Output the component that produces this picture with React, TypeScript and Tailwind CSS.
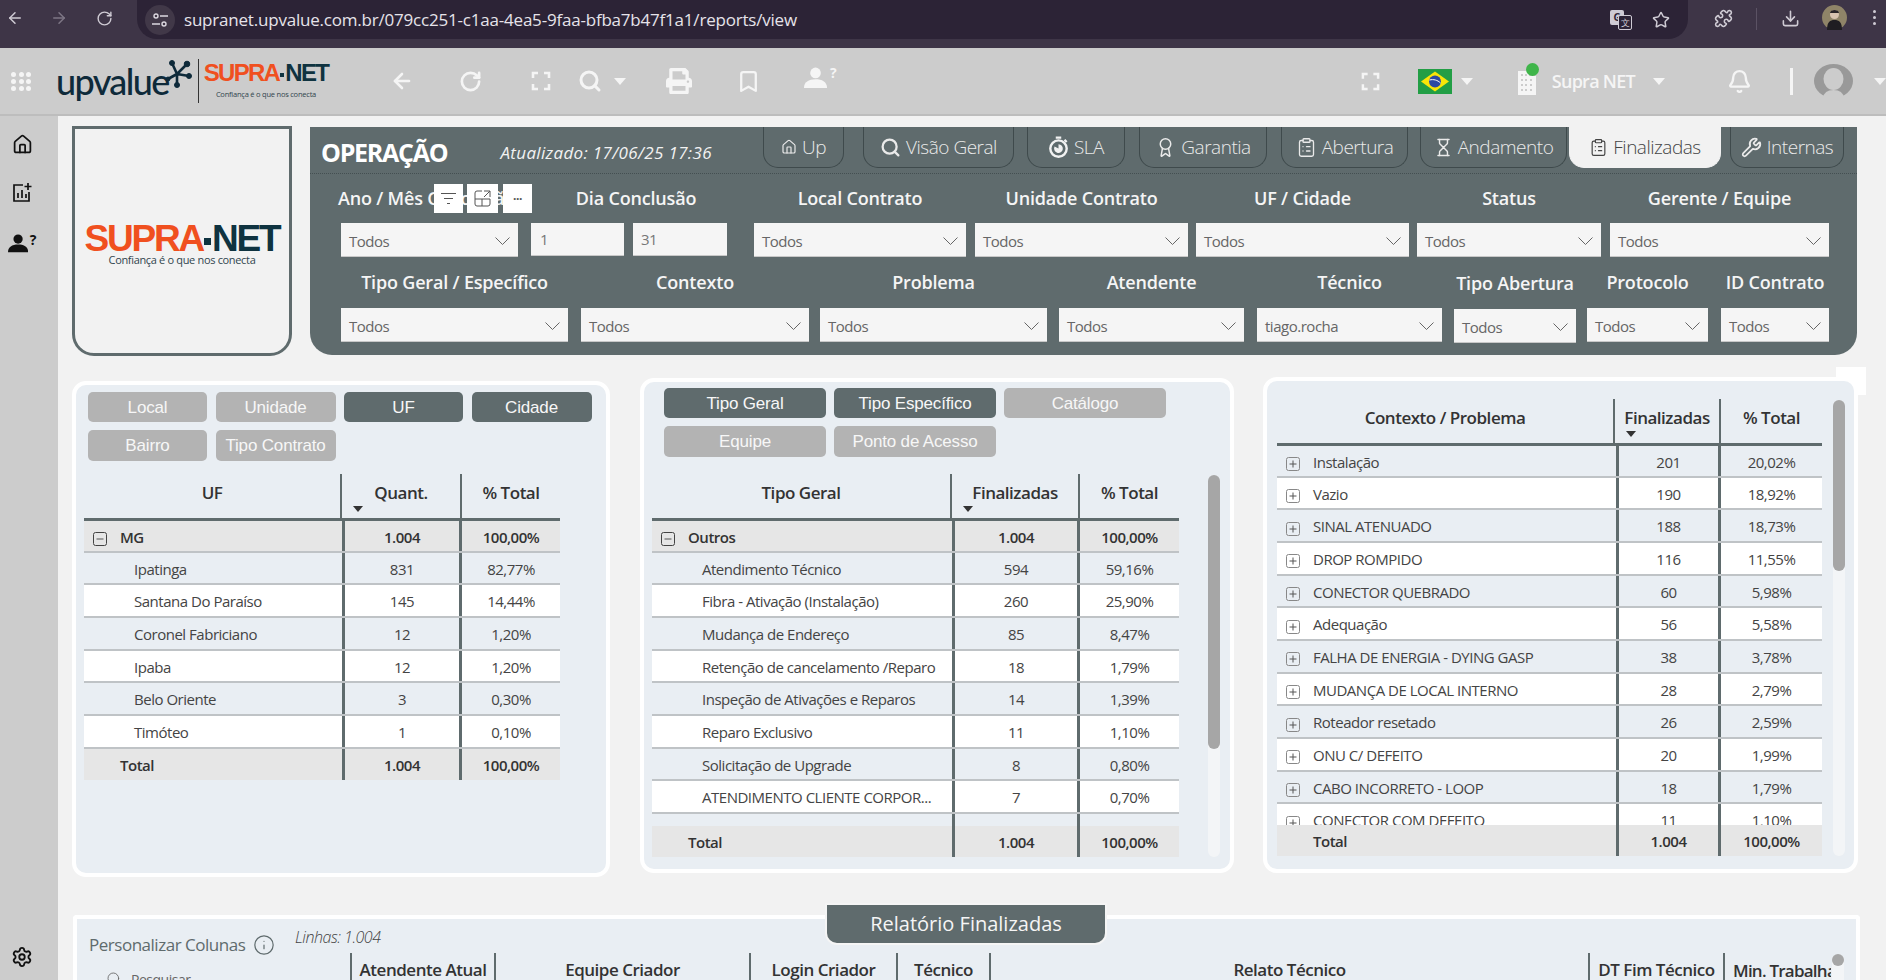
import { ReactNode } from "react";
import { ArrowLeft, ArrowRight, Award, Bell, Bookmark, ClipboardList, Download, Hourglass, House, Info, Puzzle, RotateCw, Search, Settings, Star, Wrench } from "lucide-react";
import { FaPrint } from "react-icons/fa";

type Row = { name: string; a: string; b: string; kind?: "group" | "child" | "plus" };

const ufRows: Row[] = [
  { name: "MG", a: "1.004", b: "100,00%", kind: "group" },
  { name: "Ipatinga", a: "831", b: "82,77%" },
  { name: "Santana Do Paraíso", a: "145", b: "14,44%" },
  { name: "Coronel Fabriciano", a: "12", b: "1,20%" },
  { name: "Ipaba", a: "12", b: "1,20%" },
  { name: "Belo Oriente", a: "3", b: "0,30%" },
  { name: "Timóteo", a: "1", b: "0,10%" },
];

const tipoRows: Row[] = [
  { name: "Outros", a: "1.004", b: "100,00%", kind: "group" },
  { name: "Atendimento Técnico", a: "594", b: "59,16%" },
  { name: "Fibra - Ativação (Instalação)", a: "260", b: "25,90%" },
  { name: "Mudança de Endereço", a: "85", b: "8,47%" },
  { name: "Retenção de cancelamento /Reparo", a: "18", b: "1,79%" },
  { name: "Inspeção de Ativações e Reparos", a: "14", b: "1,39%" },
  { name: "Reparo Exclusivo", a: "11", b: "1,10%" },
  { name: "Solicitação de Upgrade", a: "8", b: "0,80%" },
  { name: "ATENDIMENTO CLIENTE CORPOR...", a: "7", b: "0,70%" },
  { name: "Migração Corporativa", a: "6", b: "0,60%" },
];

const contextoRows: Row[] = [
  ["Instalação", "201", "20,02%"],
  ["Vazio", "190", "18,92%"],
  ["SINAL ATENUADO", "188", "18,73%"],
  ["DROP ROMPIDO", "116", "11,55%"],
  ["CONECTOR QUEBRADO", "60", "5,98%"],
  ["Adequação", "56", "5,58%"],
  ["FALHA DE ENERGIA - DYING GASP", "38", "3,78%"],
  ["MUDANÇA DE LOCAL INTERNO", "28", "2,79%"],
  ["Roteador resetado", "26", "2,59%"],
  ["ONU C/ DEFEITO", "20", "1,99%"],
  ["CABO INCORRETO - LOOP", "18", "1,79%"],
  ["CONECTOR COM DEFEITO", "11", "1,10%"],
].map(([name, a, b]) => ({ name, a, b, kind: "plus" as const }));

const Corners = ({ size = 20, color = "#f5f5f5" }: { size?: number; color?: string }) => (
  <svg width={size} height={size} viewBox="0 0 20 20" fill="none" stroke={color} strokeWidth="2.6">
    <path d="M2 7V2h5M13 2h5v5M18 13v5h-5M7 18H2v-5" />
  </svg>
);

const Caret = ({ className }: { className: string }) => <span className={`block h-0 w-0 border-x-[6px] border-t-[7px] border-x-transparent ${className}`} />;

const UserHelp = ({ color, size = 26 }: { color: string; size?: number }) => (
  <span className="relative inline-block" style={{ width: size, height: size * 0.72, color }}>
    <svg viewBox="0 0 20 18" width={size * 0.72} height={size * 0.72} fill={color}>
      <circle cx="10" cy="5" r="4.6" />
      <path d="M0 18c0-5 4-7.5 10-7.500s10 2.500 10 7.500z" />
    </svg>
    <span className="absolute right-0 top-0 text-[14px] font-bold leading-none">?</span>
  </span>
);

const ChartAdd = () => (
  <svg width="20" height="20" viewBox="0 0 20 20" fill="none" stroke="#111" strokeWidth="1.7">
    <path d="M11 3H2v16h15v-9" />
    <path d="M6 16v-5M10 16V8M14 16v-4M16 1v7M12.500 4.500h7" />
  </svg>
);

const Chevron = () => (
  <svg width="15" height="8" viewBox="0 0 15 8" fill="none" stroke="#666" strokeWidth="1">
    <path d="M.5.500 7.500 7.500 14.500.500" />
  </svg>
);

const Select = ({ value = "Todos", className }: { value?: string; className: string }) => (
  <div className={`flex h-[33px] items-center justify-between bg-[#f5f5f5] pl-[8px] pr-[8px] pt-[3px] text-[15px] text-[#666] shadow-[0_1px_0_#c8c8c8] ${className}`}>
    <span>{value}</span>
    <Chevron />
  </div>
);

const Label = ({ children, className = "justify-center" }: { children: ReactNode; className?: string }) => (
  <div className={`flex h-[24px] items-center whitespace-nowrap text-[18px] font-semibold tracking-[-0.01em] text-[#f5f5f5] ${className}`}>{children}</div>
);

const SlaIcon = () => (
  <svg width="21" height="23" viewBox="0 0 19 21" fill="none" stroke="#f2f2f2">
    <circle cx="9.500" cy="11.500" r="7.500" strokeWidth="2.200" />
    <path d="M9.500 11.500V7.500a4 4 0 1 1-3.600 2.200z" fill="#f2f2f2" strokeWidth="0" />
    <path d="M7 1.500h5M15 3.500l2 2" strokeWidth="2" />
  </svg>
);

const tabs = [
  { label: "Up", icon: <House size={16} strokeWidth={1.8} />, cls: "w-[81px] text-[#eaeaea] border-[#3f4a4c]" },
  { label: "Visão Geral", icon: <Search size={21} strokeWidth={2.6} />, cls: "ml-[19px] w-[151px] text-[#eaeaea] border-[#3f4a4c]" },
  { label: "SLA", icon: <SlaIcon />, cls: "ml-[13px] w-[98px] text-[#eaeaea] border-[#3f4a4c]" },
  { label: "Garantia", icon: <Award size={21} strokeWidth={1.7} />, cls: "ml-[14px] w-[128px] text-[#eaeaea] border-[#3f4a4c]" },
  { label: "Abertura", icon: <ClipboardList size={21} strokeWidth={1.5} />, cls: "ml-[14px] w-[127px] text-[#eaeaea] border-[#3f4a4c]" },
  { label: "Andamento", icon: <Hourglass size={19} strokeWidth={1.8} />, cls: "ml-[12px] w-[147px] gap-[3px] text-[#eaeaea] border-[#3f4a4c]" },
  { label: "Finalizadas", icon: <ClipboardList size={19} strokeWidth={1.5} />, cls: "ml-[2px] w-[152px] gap-[3px] bg-[#f2f2f2] text-[#444] border-[#f2f2f2]" },
  { label: "Internas", icon: <Wrench size={21} strokeWidth={2} />, cls: "ml-[9px] w-[114px] gap-[3px] text-[#eaeaea] border-[#3f4a4c]" },
];

const row2 = [
  { label: "Tipo Geral / Específico", cls: "w-[227px]" },
  { label: "Contexto", cls: "ml-[13px] w-[228px]" },
  { label: "Problema", cls: "ml-[11px] w-[227px]" },
  { label: "Atendente", cls: "ml-[12px] w-[185px]" },
  { label: "Técnico", cls: "ml-[13px] w-[185px]", value: "tiago.rocha" },
  { label: "Tipo Abertura", cls: "ml-[12px] w-[122px] mt-[1px]" },
  { label: "Protocolo", cls: "ml-[11px] w-[121px]" },
  { label: "ID Contrato", cls: "ml-[13px] w-[108px]" },
];

const row1 = [
  { label: "Local Contrato", cls: "ml-[27px] w-[212px]" },
  { label: "Unidade Contrato", cls: "ml-[9px] w-[213px]" },
  { label: "UF / Cidade", cls: "ml-[8px] w-[213px]" },
  { label: "Status", cls: "ml-[8px] w-[184px]" },
  { label: "Gerente / Equipe", cls: "ml-[9px] w-[219px]" },
];

const FilterPanel = () => (
  <div className="relative ml-[18px] mt-[11px] h-[228px] w-[1547px] rounded-b-[22px] bg-[#5f6b6d]">
    <div className="flex h-[47px] border-b border-dotted border-[#444f51]">
      <div className="flex w-[453px] shrink-0 items-center whitespace-nowrap pl-[11px] pt-[5px] text-white">
        <span className="text-[25px] font-bold tracking-[-0.05em]">OPERAÇÃO</span>
        <span className="ml-[53px] text-[17px] italic tracking-[0.02em] text-[#f2f2f2]">Atualizado: 17/06/25 17:36</span>
      </div>
      {tabs.map((t) => (
        <div key={t.label} className={`flex h-[41px] items-center justify-center gap-[5px] whitespace-nowrap rounded-b-[15px] border-x border-b text-[19px] font-light ${t.cls}`}>
          {t.icon}
          <span>{t.label}</span>
        </div>
      ))}
    </div>
    <div className="flex pl-[31px] pt-[12px]">
      <div className="w-[177px]">
        <Label className="justify-start -ml-[3px]">Ano / Mês Conclusão</Label>
        <Select className="mt-[13px]" />
      </div>
      <div className="ml-[13px] w-[196px]">
        <Label className="justify-center pl-[14px]">Dia Conclusão</Label>
        <div className="mt-[13px] flex gap-[9px]">
          <div className="h-[32px] w-[93px] bg-[#f5f5f5] pl-[9px] pt-[5px] text-[15px] text-[#777] shadow-[0_1px_0_#c8c8c8]">1</div>
          <div className="h-[32px] w-[94px] bg-[#f5f5f5] pl-[8px] pt-[5px] text-[15px] text-[#777] shadow-[0_1px_0_#c8c8c8]">31</div>
        </div>
      </div>
      {row1.map((c) => (
        <div key={c.label} className={c.cls}>
          <Label>{c.label}</Label>
          <Select className="mt-[13px]" />
        </div>
      ))}
    </div>
    <div className="flex pl-[31px] pt-[14px]">
      {row2.map((c) => (
        <div key={c.label} className={c.cls}>
          <Label>{c.label}</Label>
          <Select value={c.value} className="mt-[14px]" />
        </div>
      ))}
    </div>
    {/* hover toolbar of the visual */}
    <div className="absolute left-[124px] top-[57px] flex">
      <div className="flex h-[29px] w-[29px] items-center justify-center bg-white">
        <svg width="15" height="12" viewBox="0 0 15 12" stroke="#555" fill="none"><path d="M0 .5h15M3 5.500h9M6 10.500h3" /></svg>
      </div>
      <div className="ml-[4px] flex h-[29px] w-[31px] items-center justify-center bg-white">
        <svg width="17" height="17" viewBox="0 0 17 17" stroke="#555" fill="none"><path d="M8 1H3a2 2 0 0 0-2 2v11a2 2 0 0 0 2 2h11a2 2 0 0 0 2-2V9H1M8 9v7M10 1h6v6M16 1l-6 6" /></svg>
      </div>
      <div className="ml-[5px] flex h-[29px] w-[29px] items-center justify-center bg-white text-[12px] font-bold leading-none text-[#555]">···</div>
    </div>
  </div>
);

const Btn = ({ label, on, tall }: { label: string; on?: boolean; tall?: boolean }) => (
  <div className={`flex items-center justify-center rounded-[5px] pt-[1px] font-['Liberation_Sans',sans-serif] text-[17px] tracking-[-0.01em] text-[#f7f7f7] ${on ? "bg-[#5f6b6d]" : "bg-[#b3b3b3]"} ${tall ? "h-[31px]" : "h-[30px]"}`}>{label}</div>
);

const Expander = ({ minus }: { minus?: boolean }) => (
  <svg width="14" height="14" viewBox="0 0 14 14" fill="none" stroke="#555" className="mt-[4px] shrink-0">
    <rect x=".5" y=".5" width="13" height="13" rx="2" stroke={minus ? "#444" : "#888"} />
    <path d="M3.500 7h7" />
    {!minus && <path d="M7 3.500v7" />}
  </svg>
);

type TableProps = {
  head: string[];
  headCols: string;
  bodyCols: string;
  rows: Row[];
  className: string;
  bodyClass?: string;
  indent: string;
};

const DataTable = ({ head, headCols, bodyCols, rows, className, bodyClass = "", indent }: TableProps) => (
  <div className={`text-[15px] text-[#444] ${className}`}>
    <div className={`grid h-[47px] border-b-[3px] border-[#5f6b6d] text-[17px] font-semibold text-[#333] ${headCols}`}>
      {head.map((h, i) => (
        <div key={h} className={`relative flex items-center justify-center pb-[6px] ${i < 2 ? "border-r-2 border-[#5f6b6d]" : ""}`}>
          {h}
          {i === 1 && <Caret className="absolute bottom-[6px] left-[11px] border-t-[#333] !border-x-[5px] !border-t-[6px]" />}
        </div>
      ))}
    </div>
    <div className={`overflow-hidden ${bodyClass}`}>
      {rows.map((r, i) => {
        const group = r.kind === "group";
        const plus = r.kind === "plus";
        const bg = group ? "bg-[#e6e6e6] font-semibold text-[#333]" : (i % 2 === 1) === plus ? "bg-white" : "bg-[#e9eef3]";
        return (
          <div key={r.name} className={`grid h-[32.7px] border-b-2 border-[#bfc3c6] first:h-[31.5px] ${bodyCols} ${bg}`}>
            <div className={`flex items-center gap-[8px] overflow-hidden whitespace-nowrap border-r-[3px] border-[#5f6b6d] pt-[2px] ${plus || group ? "pl-[9px]" : indent}`}>
              {group && <Expander minus />}
              {plus && <Expander />}
              <span className={group || plus ? "ml-[5px]" : ""}>{r.name}</span>
            </div>
            <div className="flex items-center justify-center border-r-[3px] border-[#5f6b6d] pt-[2px]">{r.a}</div>
            <div className="flex items-center justify-center pt-[2px]">{r.b}</div>
          </div>
        );
      })}
    </div>
    <div className={`grid h-[31px] bg-[#e6e6e6] font-semibold text-[#333] ${bodyCols}`}>
      <div className="flex items-center border-r-[3px] border-[#5f6b6d] pl-[36px] pt-[2px]">Total</div>
      <div className="flex items-center justify-center border-r-[3px] border-[#5f6b6d] pt-[2px]">1.004</div>
      <div className="flex items-center justify-center pt-[2px]">100,00%</div>
    </div>
  </div>
);

const Scroll = ({ className, thumb }: { className: string; thumb: string }) => (
  <div className={`absolute w-[12px] rounded-full bg-[#f3f5f7] ${className}`}>
    <div className={`w-full rounded-full bg-[#a6a6a6] ${thumb}`} />
  </div>
);

const Flag = () => (
  <svg width="34" height="25" viewBox="0 0 34 25">
    <rect width="34" height="25" fill="#229e45" />
    <path d="M17 2.500 31 12.500 17 22.500 3 12.500z" fill="#f8e509" />
    <circle cx="17" cy="12.500" r="6" fill="#2b49a3" />
    <path d="M11.500 11c4-1 8 0 11 3" stroke="#fff" strokeWidth="1" fill="none" />
  </svg>
);

const SupraLogo = ({ big }: { big?: boolean }) => (
  <div className="flex flex-col items-center">
    <div className={`flex items-center whitespace-nowrap font-['Liberation_Sans',sans-serif] font-bold leading-none ${big ? "text-[37px] tracking-[-0.06em]" : "text-[24px] tracking-[-0.07em]"}`}>
      <span className="text-[#f0501f]">SUPRA</span>
      <span className={`flex flex-col bg-[#0f3340] ${big ? "mx-[1px] mt-[6px] h-[7px] w-[7px]" : "mx-[1px] mt-[4px] h-[4px] w-[4px]"}`} />
      <span className="text-[#0f3340]">NET</span>
    </div>
    <div className={`whitespace-nowrap tracking-[-0.03em] text-[#31454e] ${big ? "mt-[-4px] text-[11px] leading-[13px]" : "mt-[4px] text-[7.5px]"}`}>Confiança é o que nos conecta</div>
  </div>
);

const AppHeader = () => (
  <div className="flex h-[68px] items-center border-b-2 border-[#bdbdbd] bg-[#cccccc] text-[#f5f5f5]">
    <div className="ml-[11px] grid w-[21px] grid-cols-3 gap-[2px]">
      {Array.from({ length: 9 }).map((_, i) => <span key={i} className="h-[5px] w-[5px] rounded-full bg-[#f5f5f5]" />)}
    </div>
    <div className="ml-[24px] flex items-center">
      <span className="font-['Lato',sans-serif] text-[36px] font-medium leading-none tracking-[-0.045em] text-[#0e2a3a]">upvalue</span>
      <svg width="26" height="28" viewBox="0 0 26 28" className="-ml-[3px] -mt-[14px]" fill="#0e2a3a" stroke="#0e2a3a">
        <path d="M11 14 6 3M11 14l10-10M11 14l12 2M11 14l0 11M11 14 2 19" strokeWidth="2.600" />
        <circle cx="6" cy="3" r="2.500" /><circle cx="21" cy="4" r="2.800" /><circle cx="23" cy="16" r="2.500" /><circle cx="11" cy="25" r="2.500" /><circle cx="2" cy="19" r="2" />
      </svg>
      <span className="ml-[6px] h-[44px] w-px bg-[#333]" />
      <div className="ml-[5px]"><SupraLogo /></div>
    </div>
    <ArrowLeft size={24} strokeWidth={2.6} className="ml-[62px]" />
    <RotateCw size={23} strokeWidth={2.8} className="ml-[45px]" />
    <div className="ml-[49px]"><Corners /></div>
    <Search size={24} strokeWidth={3} className="ml-[27px]" />
    <Caret className="ml-[12px] border-t-[#f5f5f5]" />
    <FaPrint size={26} className="ml-[40px]" />
    <Bookmark size={25} strokeWidth={2.2} className="ml-[44px]" />
    <div className="ml-[43px]"><UserHelp color="#f5f5f5" size={32} /></div>
    <div className="ml-auto"><Corners size={19} /></div>
    <div className="ml-[38px]"><Flag /></div>
    <Caret className="ml-[9px] border-t-[#f5f5f5]" />
    <div className="relative ml-[45px]">
      <svg width="18" height="28" viewBox="0 0 18 28" fill="#f5f5f5">
        <path d="M0 4h11v5h7v19H0z" />
        <path d="M3 7h2v2H3zM7 7h2v2H7zM3 12h2v2H3zM7 12h2v2H7zM12 12h2v2h-2zM3 17h2v2H3zM7 17h2v2H7zM12 17h2v2h-2zM3 22h2v2H3zM7 22h2v2H7zM12 22h2v2h-2z" fill="#cccccc" />
      </svg>
      <span className="absolute -top-[4px] right-[-3px] h-[13px] w-[13px] rounded-full bg-[#3fb54a]" />
    </div>
    <span className="ml-[16px] text-[18px] font-semibold tracking-[-0.04em]">Supra NET</span>
    <Caret className="ml-[18px] border-t-[#f5f5f5]" />
    <Bell size={25} strokeWidth={2.200} className="ml-[62px]" />
    <span className="ml-[38px] h-[27px] w-[3px] bg-[#f5f5f5]" />
    <svg width="39" height="34" viewBox="0 0 39 34" className="ml-[21px]">
      <ellipse cx="19.500" cy="17" rx="19.500" ry="17" fill="#999" />
      <ellipse cx="19.500" cy="15" rx="10" ry="11" fill="#cccccc" />
      <path d="M9 34q1-8 10.500-8t10.500 8z" fill="#cccccc" />
    </svg>
    <Caret className="ml-[21px] border-t-[#f5f5f5]" />
  </div>
);

const TranslateIcon = () => (
  <span className="relative block h-[20px] w-[22px]">
    <span className="absolute left-0 top-0 flex h-[15px] w-[14px] items-center justify-center rounded-[2px] bg-[#cfcbd4] text-[10px] font-bold leading-none text-[#2c2336]">G</span>
    <span className="absolute bottom-0 right-0 flex h-[15px] w-[14px] items-center justify-center rounded-[2px] border border-[#cfcbd4] bg-[#2c2336] text-[9px] leading-none text-[#cfcbd4]">文</span>
  </span>
);

const BrowserBar = () => (
  <div className="flex h-[48px] items-start bg-[#3e3547] text-[#cfcbd4]">
    <ArrowLeft size={18} className="ml-[6px] mt-[9px]" />
    <ArrowRight size={18} className="ml-[26px] mt-[9px] text-[#7d7685]" />
    <RotateCw size={17} className="ml-[28px] mt-[10px]" />
    <div className="ml-[24px] flex h-[39px] w-[1551px] items-center rounded-b-[20px] bg-[#2c2336] pl-[8px]">
      <div className="flex h-[30px] w-[30px] items-center justify-center rounded-full bg-[#413848]">
        <svg width="16" height="14" viewBox="0 0 16 14" fill="none" stroke="#dcd8e0" strokeWidth="1.400">
          <circle cx="4" cy="3" r="2" /><path d="M8 3h8M0 11h8" /><circle cx="12" cy="11" r="2" />
        </svg>
      </div>
      <span className="ml-[9px] text-[17px] tracking-[-0.012em] text-[#e6e3ea]">supranet.upvalue.com.br/079cc251-c1aa-4ea5-9faa-bfba7b47f1a1/reports/view</span>
      <span className="ml-auto"><TranslateIcon /></span>
      <Star size={18} className="ml-[20px] mr-[18px]" />
    </div>
    <Puzzle size={19} className="ml-[26px] mt-[9px]" />
    <span className="ml-[23px] mt-[8px] h-[22px] w-px bg-[#5b5264]" />
    <Download size={19} className="ml-[24px] mt-[9px]" />
    <svg width="25" height="25" viewBox="0 0 25 25" className="ml-[22px] mt-[5px]">
      <circle cx="12.500" cy="12.500" r="12.500" fill="#8f8468" />
      <path d="M5 25c0-8 3-10 7.500-10S20 17 20 25z" fill="#1f1d22" />
      <circle cx="12.500" cy="9.500" r="4.500" fill="#d8c3b0" />
      <path d="M8 8c0-4 9-4 9 0z" fill="#2a2528" />
    </svg>
    <span className="ml-[26px] mt-[10px] flex flex-col gap-[3px]">
      <span className="h-[3px] w-[3px] rounded-full bg-[#cfcbd4]" />
      <span className="h-[3px] w-[3px] rounded-full bg-[#cfcbd4]" />
      <span className="h-[3px] w-[3px] rounded-full bg-[#cfcbd4]" />
    </span>
  </div>
);

const Sidebar = () => (
  <div className="flex h-full w-[58px] shrink-0 flex-col items-center bg-[#cccccc] pr-[14px] pt-[18px] text-[#111]">
    <House size={21} strokeWidth={2} />
    <div className="mt-[27px]"><ChartAdd /></div>
    <div className="mt-[31px]"><UserHelp color="#111" size={28} /></div>
    <Settings size={22} strokeWidth={2} className="mt-auto mb-[12px]" />
  </div>
);

const bottomCols = [
  { label: "Atendente Atual", cls: "w-[144px]" },
  { label: "Equipe Criador", cls: "w-[255px]" },
  { label: "Login Criador", cls: "w-[147px]" },
  { label: "Técnico", cls: "w-[93px]" },
  { label: "Relato Técnico", cls: "w-[599px]" },
  { label: "DT Fim Técnico", cls: "w-[135px]" },
];

const BottomCard = () => (
  <div className="relative ml-[15px] mt-[38px] h-[80px] w-[1787px] rounded-t-[4px] border-[4px] border-b-0 border-white bg-[#e9eef3] text-[#555]">
    <div className="flex">
      <div className="w-[218px] shrink-0 pl-[12px] pt-[13px]">
        <div className="flex items-center whitespace-nowrap text-[17px] font-medium text-[#5f6b6d]">
          Personalizar Colunas
          <Info size={22} strokeWidth={1.300} className="ml-[8px]" />
        </div>
        <div className="ml-[17px] mt-[11px] flex items-center text-[14px] text-[#666]">
          <Search size={16} strokeWidth={1.300} />
          <span className="ml-[9px]">Pesquisar</span>
        </div>
      </div>
      <div className="min-w-0 flex-1">
        <div className="h-[34px] whitespace-nowrap pt-[6px] text-[16px] font-light italic text-[#444]">Linhas: 1.004</div>
        <div className="ml-[55px] flex text-[17px] font-semibold text-[#333]">
          {bottomCols.map((c) => (
            <div key={c.label} className={`flex h-[40px] shrink-0 items-center justify-center whitespace-nowrap border-l-2 border-[#5f6b6d] pb-[6px] ${c.cls}`}>{c.label}</div>
          ))}
          <div className="h-[40px] w-[108px] overflow-hidden whitespace-nowrap border-l-2 border-[#5f6b6d] pl-[8px] pt-[5px] tracking-[-0.045em]">Min. Trabalhadas</div>
        </div>
      </div>
    </div>
    <div className="absolute left-[1755px] top-[35px] h-[45px] w-[12px] rounded-full bg-[#f3f5f7]">
      <div className="h-[12px] rounded-full bg-[#a6a6a6]" />
    </div>
    <div className="absolute left-[748px] -top-[16px] flex h-[42px] w-[282px] items-center justify-center rounded-b-[12px] border-2 border-[#f5f5f5] bg-[#5f6b6d] text-[20px] tracking-normal text-[#f5f5f5]">Relatório Finalizadas</div>
  </div>
);

export default function App() {
  return (
    <div className="h-[980px] w-[1886px] overflow-hidden bg-[#f2f2f2] font-['Open_Sans',sans-serif] tracking-[-0.03em]">
      <BrowserBar />
      <AppHeader />
      <div className="flex h-[864px]">
        <Sidebar />
        <div className="min-w-0 flex-1">
          <div className="flex pl-[14px]">
            <div className="mt-[10px] flex h-[230px] w-[220px] items-center justify-center rounded-b-[22px] border-[3px] border-[#5f6b6d] bg-[#f2f2f2] pt-[4px]">
              <SupraLogo big />
            </div>
            <FilterPanel />
          </div>
          <div className="isolate flex items-start pl-[14px] pt-[21px]">
            <div className="relative mt-[4px] h-[496px] w-[538px] rounded-[14px] border-[4px] border-white bg-[#e9eef3]">
              <div className="ml-[12px] mt-[7px] grid grid-cols-[119px_120px_119px_120px] gap-x-[8.5px] gap-y-[8px]">
                <Btn label="Local" /><Btn label="Unidade" /><Btn label="UF" on /><Btn label="Cidade" on />
                <Btn label="Bairro" tall /><Btn label="Tipo Contrato" tall />
              </div>
              <DataTable
                className="ml-[8px] mt-[13px] w-[476px]"
                head={["UF", "Quant.", "% Total"]}
                headCols="grid-cols-[258px_120px_98px]"
                bodyCols="grid-cols-[261px_117px_98px]"
                rows={ufRows}
                indent="pl-[50px]"
              />
            </div>
            <div className="relative ml-[30px] mt-[1px] h-[495px] w-[594px] rounded-[14px] border-[4px] border-white bg-[#e9eef3]">
              <div className="ml-[20px] mt-[6px] grid grid-cols-[162px_162px_162px] gap-x-[8px] gap-y-[8px]">
                <Btn label="Tipo Geral" on /><Btn label="Tipo Específico" on /><Btn label="Catálogo" />
                <Btn label="Equipe" tall /><Btn label="Ponto de Acesso" tall />
              </div>
              <DataTable
                className="ml-[8px] mt-[17px] w-[527px]"
                head={["Tipo Geral", "Finalizadas", "% Total"]}
                headCols="grid-cols-[300px_128px_99px]"
                bodyCols="grid-cols-[303px_125px_99px]"
                rows={tipoRows}
                bodyClass="h-[305px]"
                indent="pl-[50px]"
              />
              <Scroll className="left-[564px] top-[93px] h-[382px]" thumb="h-[274px]" />
            </div>
            <div className="relative ml-[29px] h-[496px] w-[595px] rounded-[14px] border-[4px] border-white bg-[#e9eef3]">
              <div className="absolute -right-[12px] -top-[14px] -z-10 h-[28px] w-[30px] bg-white" />
              <DataTable
                className="ml-[10px] mt-[18px] w-[545px]"
                head={["Contexto / Problema", "Finalizadas", "% Total"]}
                headCols="grid-cols-[338px_106px_101px]"
                bodyCols="grid-cols-[342px_102px_101px]"
                rows={contextoRows}
                bodyClass="h-[379px]"
                indent="pl-[36px]"
              />
              <Scroll className="left-[566px] top-[19px] h-[456px]" thumb="h-[171px]" />
            </div>
          </div>
          <BottomCard />
        </div>
      </div>
    </div>
  );
}
